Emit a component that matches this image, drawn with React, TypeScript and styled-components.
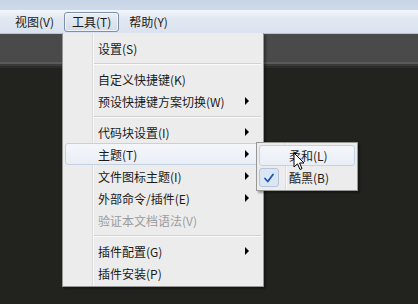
import React from "react";
import styled, { createGlobalStyle } from "styled-components";

const GlobalStyle = createGlobalStyle`
  html, body {
    margin: 0;
    padding: 0;
    background: #22221f;
    overflow: hidden;
  }
  body {
    font-family: "Noto Sans CJK SC", "Noto Sans", sans-serif;
    font-size: 12px;
    color: #1a1a1a;
  }
`;

type Entry =
  | { kind: "item"; label: string; sub?: boolean; disabled?: boolean; active?: boolean }
  | { kind: "sep" };

const toolMenu: Entry[] = [
  { kind: "item", label: "设置(S)" },
  { kind: "sep" },
  { kind: "item", label: "自定义快捷键(K)" },
  { kind: "item", label: "预设快捷键方案切换(W)", sub: true },
  { kind: "sep" },
  { kind: "item", label: "代码块设置(I)", sub: true },
  { kind: "item", label: "主题(T)", sub: true, active: true },
  { kind: "item", label: "文件图标主题(I)", sub: true },
  { kind: "item", label: "外部命令/插件(E)", sub: true },
  { kind: "item", label: "验证本文档语法(V)", disabled: true },
  { kind: "sep" },
  { kind: "item", label: "插件配置(G)", sub: true },
  { kind: "item", label: "插件安装(P)" },
];

const App = () => {
  return (
    <Window>
      <GlobalStyle />
      <TitleStrip />
      <MenuBar>
        <BarItem>视图(V)</BarItem>
        <BarItem open>工具(T)</BarItem>
        <BarItem>帮助(Y)</BarItem>
      </MenuBar>
      <Workspace>
        <TopBand />
        <Editor />
      </Workspace>

      <Dropdown>
        <Gutter />
        {toolMenu.map((e, i) =>
          e.kind === "sep" ? (
            <Separator key={i} />
          ) : (
            <Item key={i} active={e.active} disabled={e.disabled}>
              <Label>{e.label}</Label>
              {e.sub && <Arrow />}
            </Item>
          )
        )}
      </Dropdown>

      <SubMenu>
        <SubGutter />
        <SubItem active>
          <CheckCell />
          <SubLabel>柔和(L)</SubLabel>
        </SubItem>
        <SubItem>
          <CheckCell checked>
            <svg width="12" height="12" viewBox="0 0 12 12">
              <path d="M2 6.5 L4.8 9.5 L10 2.5" fill="none" stroke="#1d56b0" strokeWidth="1.8" strokeLinecap="round" strokeLinejoin="round" />
            </svg>
          </CheckCell>
          <SubLabel>酷黑(B)</SubLabel>
        </SubItem>
      </SubMenu>

      <Cursor>
        <svg width="13" height="20" viewBox="0 0 13 20">
          <path d="M1 1 L1 15 L4.5 11.8 L7 17.5 L9 16.6 L6.6 11 L11 11 Z" fill="#fff" stroke="#000" strokeWidth="1" strokeLinejoin="round" />
        </svg>
      </Cursor>
    </Window>
  );
};

const Window = styled.div`
  position: relative;
  width: 418px;
  height: 304px;
  display: flex;
  flex-direction: column;
  overflow: hidden;
`;

const TitleStrip = styled.div`
  height: 10px;
  background: linear-gradient(#c6d4e6, #cfdbea);
`;

const MenuBar = styled.div`
  height: 23px;
  display: flex;
  align-items: center;
  padding-left: 7px;
  gap: 2px;
  background: linear-gradient(#f3f6fb 0%, #e2e9f3 35%, #d9e2ee 100%);
  border-bottom: 1px solid #b9c6d6;
`;

const BarItem = styled.div<{ open?: boolean }>`
  height: 18px;
  line-height: 18px;
  padding: 0 7px;
  border-radius: 3px;
  border: 1px solid ${(p) => (p.open ? "#7e8fa6" : "transparent")};
  background: ${(p) => (p.open ? "linear-gradient(#e8eef6, #d3dde9)" : "transparent")};
  box-shadow: ${(p) => (p.open ? "inset 0 0 0 1px rgba(255,255,255,0.6)" : "none")};
  color: #1a1a1a;
  white-space: nowrap;
`;

const Workspace = styled.div`
  flex: 1;
  display: flex;
  flex-direction: column;
`;

const TopBand = styled.div`
  height: 28px;
  background: #4a4a4a;
  border-bottom: 2px solid #5b5b5b;
  box-shadow: 0 2px 0 #3a3a3a, 0 4px 0 #2c2c2a;
`;

const Editor = styled.div`
  flex: 1;
  margin-top: 4px;
  background: #22221f;
`;

const Dropdown = styled.div`
  position: absolute;
  left: 62px;
  top: 33px;
  width: 198px;
  padding: 4px 0 2px 2px;
  background: #ececec;
  border: 1px solid #979797;
  border-top: none;
  box-shadow: 2px 2px 2px rgba(0, 0, 0, 0.35);
  display: flex;
  flex-direction: column;
`;

const Gutter = styled.div`
  position: absolute;
  left: 29px;
  top: 0;
  bottom: 0;
  width: 1px;
  background: #dcdcdc;
  border-right: 1px solid #f8f8f8;
`;

const Item = styled.div<{ active?: boolean; disabled?: boolean }>`
  position: relative;
  height: 22px;
  display: flex;
  align-items: center;
  padding-left: 32px;
  margin-right: -1px;
  box-sizing: border-box;
  border-radius: 3px;
  border: 1px solid ${(p) => (p.active ? "#c3d1e3" : "transparent")};
  background: ${(p) => (p.active ? "linear-gradient(#f4f6fa, #e9eef6)" : "transparent")};
  color: ${(p) => (p.disabled ? "#9c9c9c" : "#1a1a1a")};
`;

const Label = styled.span`
  flex: 1;
  white-space: nowrap;
`;

const Arrow = styled.span`
  width: 0;
  height: 0;
  margin-right: 14px;
  border-top: 4px solid transparent;
  border-bottom: 4px solid transparent;
  border-left: 4px solid #000;
`;

const Separator = styled.div`
  height: 9px;
  margin-left: 29px;
  margin-right: 2px;
  display: flex;
  align-items: center;
  &::after {
    content: "";
    flex: 1;
    height: 1px;
    background: #d2d2d2;
    border-bottom: 1px solid #fafafa;
  }
`;

const SubMenu = styled.div`
  position: absolute;
  left: 256px;
  top: 142px;
  width: 96px;
  padding: 2px;
  background: #ececec;
  border: 1px solid #979797;
  box-shadow: 2px 2px 2px rgba(0, 0, 0, 0.35);
  display: flex;
  flex-direction: column;
  gap: 1px;
`;

const SubGutter = styled.div`
  position: absolute;
  left: 28px;
  top: 0;
  bottom: 0;
  width: 1px;
  background: #dcdcdc;
  border-right: 1px solid #f8f8f8;
`;

const SubItem = styled.div<{ active?: boolean }>`
  position: relative;
  height: 21px;
  display: flex;
  align-items: center;
  box-sizing: border-box;
  border-radius: 3px;
  border: 1px solid ${(p) => (p.active ? "#c3d1e3" : "transparent")};
  background: ${(p) => (p.active ? "linear-gradient(#f4f6fa, #e9eef6)" : "transparent")};
`;

const CheckCell = styled.div<{ checked?: boolean }>`
  width: 20px;
  height: 19px;
  margin-left: -1px;
  box-sizing: border-box;
  display: flex;
  align-items: center;
  justify-content: center;
  border-radius: 3px;
  border: 1px solid ${(p) => (p.checked ? "#b4c6dd" : "transparent")};
  background: ${(p) => (p.checked ? "#dce6f3" : "transparent")};
`;

const SubLabel = styled.span`
  margin-left: 10px;
  white-space: nowrap;
`;

const Cursor = styled.div`
  position: absolute;
  left: 293px;
  top: 152px;
  width: 13px;
  height: 20px;
  pointer-events: none;
`;

export default App;
